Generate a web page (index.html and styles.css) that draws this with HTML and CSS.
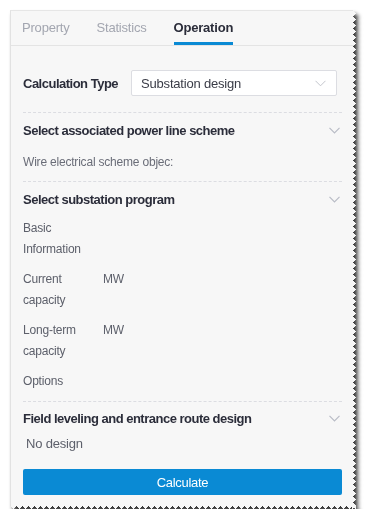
FILE: index.html
```html
<!DOCTYPE html>
<html lang="en">

<head>
    <meta charset="UTF-8">
    <title>Operation</title>
    <link rel="stylesheet" href="styles.css">
</head>

<body>
    <div class="frame">
        <div class="panel">
            <div class="tabs">
                <a class="tab">Property</a>
                <a class="tab">Statistics</a>
                <a class="tab active">Operation</a>
            </div>

            <div class="content">
                <div class="calc-row">
                    <span class="calc-label">Calculation Type</span>
                    <div class="select">
                        <span>Substation design</span>
                        <svg class="chev" width="11" height="7" viewBox="0 0 11 7">
                            <path d="M0.5 0.8 L5.5 5.8 L10.5 0.8" fill="none" stroke="#c3c5cc" stroke-width="1"/>
                        </svg>
                    </div>
                </div>

                <div class="section">
                    <div class="sec-head">
                        <span>Select associated power line scheme</span>
                        <svg class="chev" width="11" height="7" viewBox="0 0 11 7">
                            <path d="M0.5 0.8 L5.5 5.8 L10.5 0.8" fill="none" stroke="#b9bcc6" stroke-width="1.2"/>
                        </svg>
                    </div>
                    <div class="sec-body first">
                        <div class="line">Wire electrical scheme objec:</div>
                    </div>
                </div>

                <div class="section">
                    <div class="sec-head">
                        <span>Select substation program</span>
                        <svg class="chev" width="11" height="7" viewBox="0 0 11 7">
                            <path d="M0.5 0.8 L5.5 5.8 L10.5 0.8" fill="none" stroke="#b9bcc6" stroke-width="1.2"/>
                        </svg>
                    </div>
                    <div class="sec-body">
                        <div class="field">
                            <span class="field-label">Basic Information</span>
                        </div>
                        <div class="field">
                            <span class="field-label">Current capacity</span>
                            <span class="field-value">MW</span>
                        </div>
                        <div class="field">
                            <span class="field-label">Long-term capacity</span>
                            <span class="field-value">MW</span>
                        </div>
                        <div class="field">
                            <span class="field-label">Options</span>
                        </div>
                    </div>
                </div>

                <div class="section last">
                    <div class="sec-head">
                        <span>Field leveling and entrance route design</span>
                        <svg class="chev" width="11" height="7" viewBox="0 0 11 7">
                            <path d="M0.5 0.8 L5.5 5.8 L10.5 0.8" fill="none" stroke="#b9bcc6" stroke-width="1.2"/>
                        </svg>
                    </div>
                    <div class="sec-body">
                        <div class="no-design">No design</div>
                    </div>
                </div>

                <button class="btn">Calculate</button>
            </div>
        </div>
    </div>
</body>

</html>
```

FILE: styles.css
```css
body {
    margin: 0;
    background: #fff;
    font-family: "Liberation Sans", Arial, sans-serif;
    font-size: 12px;
    color: #5d606b;
}

.frame {
    padding: 10px 0 0 10px;
    filter: drop-shadow(3px 4px 2px rgba(0, 0, 0, 0.8));
}

.panel {
    width: 346px;
    height: 499px;
    box-sizing: border-box;
    background: #f7f7f7;
    border-left: 1px solid #e2e2e2;
    border-top: 1px solid #e6e6e6;
    -webkit-mask:
        linear-gradient(#000 0 0) left top / calc(100% - 4px) calc(100% - 4px) no-repeat,
        conic-gradient(from 225deg at 100% 50%, #000 90deg, #0000 0) right top / 4px 6px repeat-y,
        conic-gradient(from -45deg at 50% 100%, #000 90deg, #0000 0) left bottom / 6px 4px repeat-x;
    mask:
        linear-gradient(#000 0 0) left top / calc(100% - 4px) calc(100% - 4px) no-repeat,
        conic-gradient(from 225deg at 100% 50%, #000 90deg, #0000 0) right top / 4px 6px repeat-y,
        conic-gradient(from -45deg at 50% 100%, #000 90deg, #0000 0) left bottom / 6px 4px repeat-x;
}

.tabs {
    display: flex;
    gap: 27px;
    height: 34px;
    padding-left: 11px;
    border-bottom: 1px solid #e4e4e4;
}

.tab {
    font-size: 13px;
    line-height: 33px;
    color: #a3a6b0;
    border-bottom: 3px solid transparent;
    height: 31px;
    letter-spacing: -0.2px;
}

.tab.active {
    color: #2b2d3a;
    font-weight: bold;
    border-bottom-color: #0a8ad4;
}

.content {
    padding: 24px 14px 0 12px;
}

.calc-row {
    display: flex;
    align-items: center;
    gap: 13px;
    margin-bottom: 16px;
}

.calc-label {
    font-size: 13px;
    font-weight: bold;
    color: #2b2d3a;
    letter-spacing: -0.5px;
}

.select {
    flex: 1;
    margin-right: 5px;
    height: 24px;
    border: 1px solid #dcdde2;
    border-radius: 2px;
    background: #fff;
    display: flex;
    align-items: center;
    justify-content: space-between;
    padding: 0 10px 0 9px;
    font-size: 13px;
    color: #3a3c47;
    letter-spacing: -0.2px;
}

.section {
    border-top: 1px dashed #dcdde2;
}

.sec-head {
    height: 34px;
    display: flex;
    align-items: center;
    justify-content: space-between;
    padding-right: 2px;
    font-size: 13px;
    font-weight: bold;
    color: #2b2d3a;
    letter-spacing: -0.5px;
}

.sec-body {
    padding: 2px 0 9px;
}

.sec-body.first {
    padding: 5px 0 8px;
}

.line {
    line-height: 21px;
    color: #6a6d78;
    letter-spacing: -0.2px;
}

.field {
    display: flex;
    line-height: 21px;
    margin-bottom: 9px;
}

.field:last-child {
    margin-bottom: 0;
}

.field-label {
    width: 66px;
    margin-right: 14px;
    letter-spacing: -0.2px;
}

.field-value {
    letter-spacing: -0.2px;
}

.section.last .sec-head {
    height: 32px;
}

.section.last .sec-body {
    padding: 0 0 5px;
}

.no-design {
    line-height: 20px;
    padding-left: 3px;
    font-size: 13px;
    letter-spacing: -0.2px;
}

.btn {
    display: block;
    width: 100%;
    height: 26px;
    margin-top: 10px;
    border: none;
    border-radius: 2px;
    background: #0a8ad4;
    color: #fff;
    font-family: "Liberation Sans", Arial, sans-serif;
    font-size: 13px;
    letter-spacing: -0.3px;
}
```
